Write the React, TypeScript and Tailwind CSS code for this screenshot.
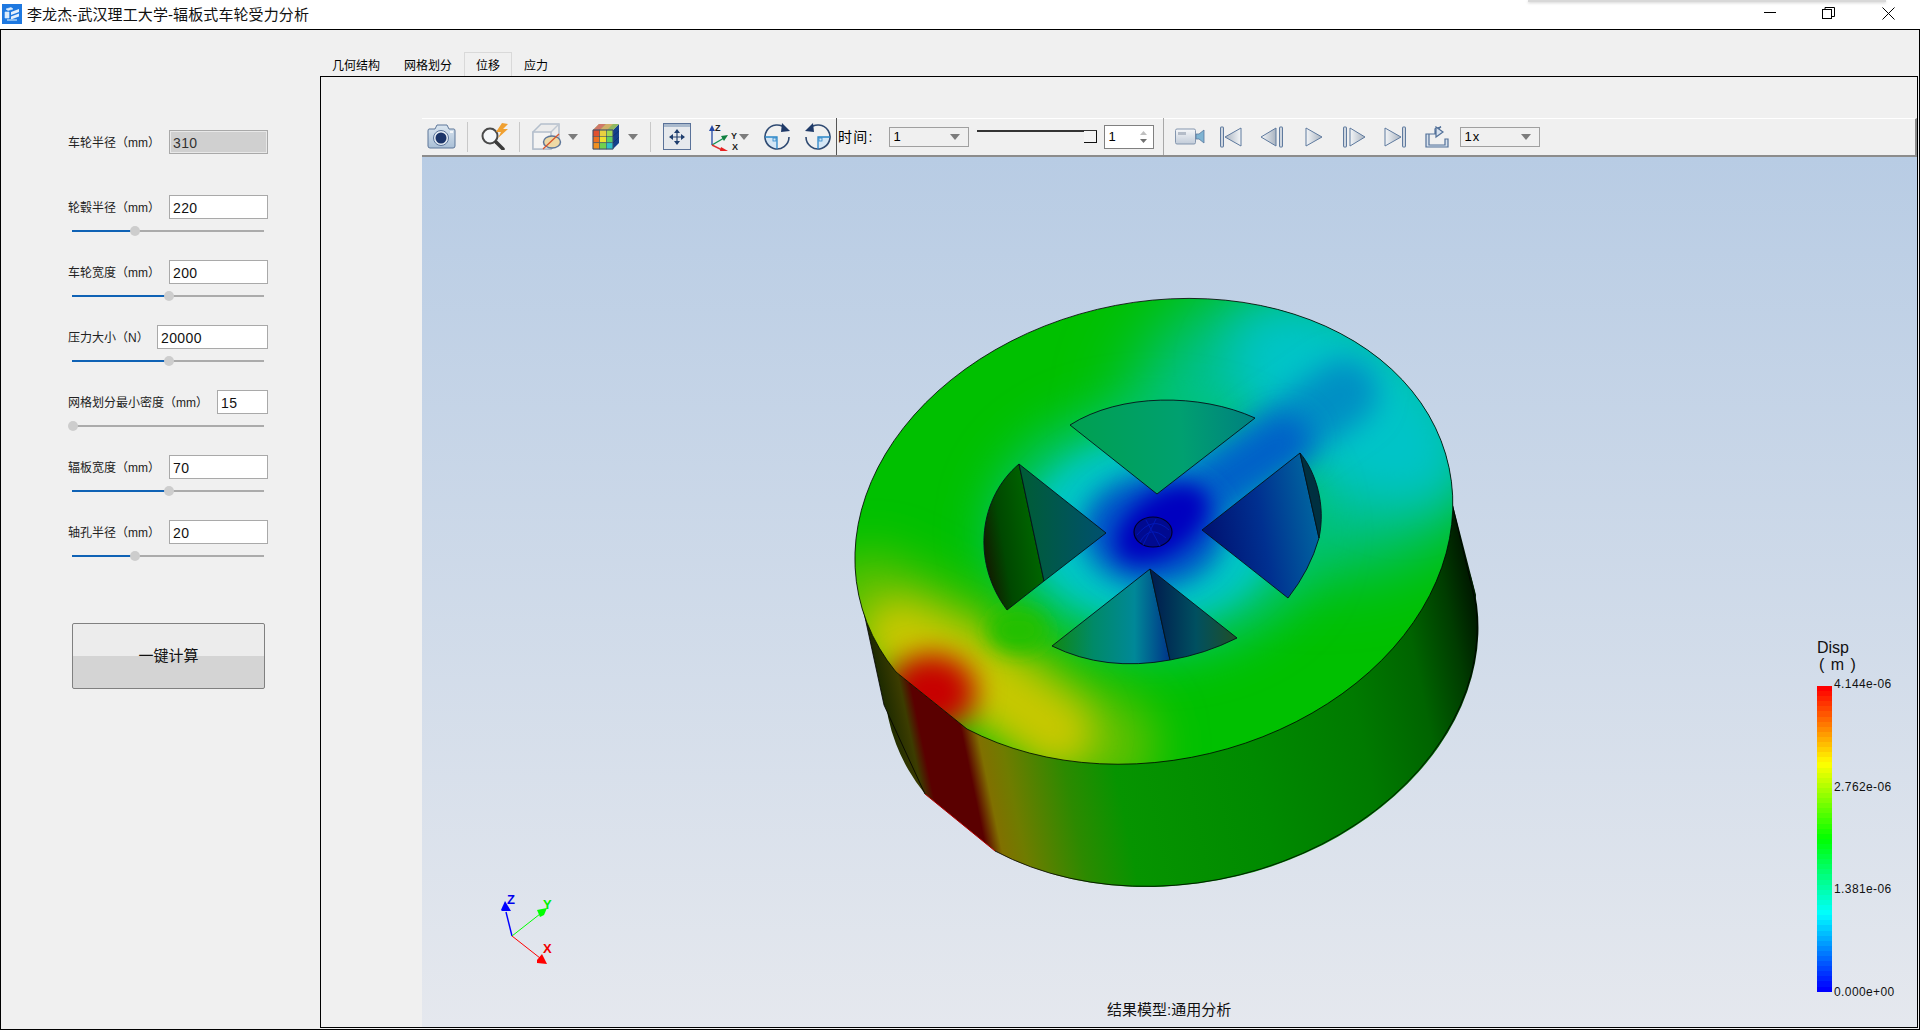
import React from "react";

const fields = [
  { label: "车轮半径（mm）", value: "310", w: "w-[99px]", disabled: true, knob: -1 },
  { label: "轮毂半径（mm）", value: "220", w: "w-[99px]", knob: 63 },
  { label: "车轮宽度（mm）", value: "200", w: "w-[99px]", knob: 97 },
  { label: "压力大小（N）", value: "20000", w: "w-[111px]", knob: 97 },
  { label: "网格划分最小密度（mm）", value: "15", w: "w-[51px]", knob: 1 },
  { label: "辐板宽度（mm）", value: "70", w: "w-[99px]", knob: 97 },
  { label: "轴孔半径（mm）", value: "20", w: "w-[99px]", knob: 63 },
];

function Row({ f }: { f: (typeof fields)[number] }) {
  return (
    <div className="h-[65px] w-[200px] shrink-0">
      <div className="flex h-[24px] items-center justify-between">
        <span className="pt-[2px] text-[12px] leading-none text-[#222]">{f.label}</span>
        <div
          className={`${f.w} h-[24px] border border-[#a9a9a9] pl-[3px] text-[14px] leading-[24px] tracking-[0.4px] ${
            f.disabled ? "bg-[#d0d0d0] text-[#333] outline outline-1 -outline-offset-2 outline-[#e8e8e8]" : "bg-white text-[#111]"
          }`}
        >
          {f.value}
        </div>
      </div>
      {f.knob >= 0 && (
        <div className="relative ml-[4px] mt-[11px] h-[2px] w-[192px] bg-[#ababab]">
          <div className="h-full bg-[#0f62b5]" style={{ width: f.knob < 5 ? 0 : f.knob }} />
          <div
            className="absolute top-[-4px] h-[10px] w-[10px] rounded-full bg-[#cdcdcd]"
            style={{ left: f.knob - 5 }}
          />
        </div>
      )}
    </div>
  );
}

function Arrow({ className = "" }: { className?: string }) {
  return (
    <svg width="10" height="6" viewBox="0 0 10 6" className={className}>
      <path d="M0 0H10L5 6Z" fill="#7c7c7c" />
    </svg>
  );
}

function Sep({ className = "" }: { className?: string }) {
  return <div className={`h-[30px] w-[1px] bg-[#c8c8c8] ${className}`} />;
}

function Combo({ text, className = "" }: { text: string; className?: string }) {
  return (
    <div className={`flex h-[20px] w-[80px] items-center justify-between border border-[#a0a0a0] pl-[4px] pr-[8px] text-[13px] tracking-[1px] ${className}`}>
      <span className="pt-[1px]">{text}</span>
      <Arrow />
    </div>
  );
}

const C = "#5d7699";

const IconCamera = () => (
  <svg width="29" height="25" viewBox="0 0 29 25" className="ml-[5px]">
    <defs>
      <linearGradient id="cam" x1="0" y1="0" x2="0" y2="1">
        <stop offset="0" stopColor="#dbe6f0" />
        <stop offset="1" stopColor="#a9bfd6" />
      </linearGradient>
    </defs>
    <path d="M2 5H8L10 1H20L22 5H27Q28 5 28 7V22Q28 24 26 24H3Q1 24 1 22V7Q1 5 2 5Z" fill="url(#cam)" stroke={C} strokeWidth="1" />
    <circle cx="14" cy="14" r="7.5" fill="#e6edf4" stroke="#5a7399" />
    <circle cx="14" cy="14" r="5.5" fill="#1b3468" />
    <rect x="23" y="7" width="3" height="2" fill="#f4f7fa" />
  </svg>
);

const IconSearch = () => (
  <svg width="30" height="27" viewBox="0 0 30 27" className="ml-[12px]">
    <circle cx="10" cy="13" r="7.5" fill="#f5f7f9" stroke="#4a4a4a" strokeWidth="2" />
    <path d="M16 19L23 26" stroke="#3b3b3b" strokeWidth="3.5" strokeLinecap="round" />
    <path d="M22 0L16 9H21L18 15L28 6H23L28 1Z" fill="#f0a030" />
  </svg>
);

const IconCube = () => (
  <svg width="30" height="27" viewBox="0 0 30 27" className="ml-[12px]">
    <path d="M1 9L9 1H27V18L19 26H1Z" fill="#ececec" stroke="#b4bfcc" strokeWidth="1.5" />
    <path d="M19 9L27 1" fill="none" stroke="#c0c8d2" strokeWidth="1.5" />
    <path d="M1 9H19V26H1Z" fill="#f3f3f3" stroke="#b4bfcc" strokeWidth="1.5" />
    <ellipse cx="20" cy="19" rx="8.5" ry="6" fill="#eed9a5" stroke="#5d7699" strokeWidth="1.5" />
    <path d="M27 11L11 26" stroke="#d8552a" strokeWidth="1.3" />
  </svg>
);

const IconColorCube = () => {
  const cols = ["#e05030", "#e8d040", "#a0d850", "#ee7020", "#f0e030", "#60d060", "#f09020", "#70d050", "#30c0c8"];
  return (
    <svg width="28" height="27" viewBox="0 0 28 27">
      <path d="M21 7L27 1V20L21 26Z" fill="#14408c" />
      <path d="M1 7L7 1H27L21 7Z" fill="#90b860" />
      <path d="M7 1L1 7H8L14 1Z" fill="#d07868" />
      <path d="M14 1L8 7H15L21 1Z" fill="#d0b068" />
      {cols.map((c, i) => (
        <rect key={i} x={1 + (i % 3) * 6.7} y={7 + Math.floor(i / 3) * 6.4} width="6.6" height="6.3" fill={c} stroke="#35485f" strokeWidth="0.5" />
      ))}
      <path d="M1 7H21V26H1Z" fill="none" stroke="#405070" strokeWidth="0.8" />
      <path d="M21 13L27 8M21 20L27 14" stroke="#0c2c68" strokeWidth="0.6" />
    </svg>
  );
};

const IconFit = () => (
  <svg width="28" height="27" viewBox="0 0 28 27">
    <rect x="0.5" y="0.5" width="27" height="26" fill="#e6e9ed" stroke="#5a7299" />
    <rect x="1" y="1" width="26" height="3" fill="#a9b9cc" />
    <path d="M14 7V21M7 14H21" stroke="#26436f" strokeWidth="1.2" />
    <path d="M14 6L11 10H17ZM14 22L11 18H17ZM6 14L10 11V17ZM22 14L18 11V17Z" fill="#1f3e6e" />
  </svg>
);

const IconAxis = () => (
  <svg width="34" height="28" viewBox="0 0 34 28" className="ml-[16px]">
    <path d="M5 22V6" stroke="#3355aa" strokeWidth="1.4" />
    <path d="M5 2L2 8H8Z" fill="#2448a8" />
    <path d="M5 22L17 15" stroke="#109050" strokeWidth="1.4" />
    <path d="M21 12L14 13L17 18Z" fill="#108040" />
    <path d="M5 22L17 28" stroke="#e03030" strokeWidth="1.4" />
    <path d="M21 28L14 24L13 28Z" fill="#e82020" />
    <text x="8" y="8" fontSize="9" fontWeight="bold" fill="#222">Z</text>
    <text x="24" y="16" fontSize="9" fontWeight="bold" fill="#222">Y</text>
    <text x="25" y="27" fontSize="9" fontWeight="bold" fill="#222">X</text>
  </svg>
);

const IconRotate = ({ flip = false, className = "" }: { flip?: boolean; className?: string }) => (
  <svg width="26" height="27" viewBox="0 0 26 27" className={className} style={flip ? { transform: "scaleX(-1)" } : undefined}>
    <path d="M13 14H1A12 12 0 0 0 13 26Z" fill="#d4e6f5" />
    <path d="M22 6A12 12 0 1 0 25 14" fill="none" stroke="#2f4a72" strokeWidth="1.6" />
    <path d="M18 0L26 8L17 9Z" fill="#1f3a68" />
    <path d="M1 14H13V26" fill="none" stroke="#2a86c8" strokeWidth="1.3" />
    <rect x="9" y="15" width="3" height="3" fill="none" stroke="#2a86c8" strokeWidth="0.8" />
  </svg>
);

const IconVideo = () => (
  <svg width="30" height="17" viewBox="0 0 30 17">
    <defs>
      <linearGradient id="vid" x1="0" y1="0" x2="0" y2="1">
        <stop offset="0" stopColor="#f6f7f9" />
        <stop offset="1" stopColor="#c2ccd9" />
      </linearGradient>
    </defs>
    <rect x="0.5" y="1" width="20" height="15" rx="1.5" fill="url(#vid)" stroke="#8496ae" />
    <rect x="3" y="4" width="8" height="3" fill="#b4bcc8" />
    <path d="M21 6H24L29 2V15L24 11H21Z" fill="#7fb4d2" stroke="#5a7a9e" strokeWidth="0.8" />
  </svg>
);

const gradPlay = (
  <defs>
    <linearGradient id="pl" x1="0" y1="0" x2="1" y2="0">
      <stop offset="0" stopColor="#f4f6f8" />
      <stop offset="1" stopColor="#a9b3c0" />
    </linearGradient>
    <linearGradient id="plr" x1="1" y1="0" x2="0" y2="0">
      <stop offset="0" stopColor="#f4f6f8" />
      <stop offset="1" stopColor="#a9b3c0" />
    </linearGradient>
  </defs>
);

const P = ({ w, children, className = "" }: { w: number; children: React.ReactNode; className?: string }) => (
  <svg width={w} height="22" viewBox={`0 0 ${w} 22`} className={className}>
    {gradPlay}
    {children}
  </svg>
);

const Bar = ({ x }: { x: number }) => <rect x={x} y="1" width="3" height="20" rx="0.5" fill="#cfd6df" stroke="#5f7a9e" strokeWidth="1" />;

const IconExport = () => (
  <svg width="24" height="22" viewBox="0 0 24 22">
    <path d="M1 8H10V3L16 0.8L11 5V8H4V19H20V13H23V21H1Z" fill="#d8e2ee" stroke="#527098" strokeWidth="1.2" />
    <path d="M11 1L18 6L11 11Z" fill="#d8e2ee" stroke="#527098" strokeWidth="1.2" />
  </svg>
);

const N = 60;
function heat(t: number) {
  const s = Math.min(t * 4, 3.999);
  const u = s - Math.floor(s);
  const v = Math.round(u * 255);
  if (s < 1) return `rgb(255,${v},0)`;
  if (s < 2) return `rgb(${255 - v},255,0)`;
  if (s < 3) return `rgb(0,255,${v})`;
  return `rgb(0,${255 - v},255)`;
}

const F = "M896 672A302 229 -12.5 1 1 967 729Z";

const Blur = ({ id, d }: { id: string; d: number }) => (
  <filter id={id} filterUnits="userSpaceOnUse" x="700" y="200" width="900" height="700">
    <feGaussianBlur stdDeviation={d} />
  </filter>
);

function Scene() {
  return (
    <svg className="absolute inset-0" width="1494" height="870" viewBox="422 157 1494 870">
      <defs>
        <clipPath id="face"><path d={F} /></clipPath>
        <Blur id="b6" d={6} />
        <Blur id="b10" d={10} />
        <Blur id="b14" d={14} />
        <Blur id="b18" d={18} />
        <Blur id="b24" d={24} />
        <Blur id="b36" d={36} />
        <linearGradient id="wall" gradientUnits="userSpaceOnUse" x1="860" y1="700" x2="1467" y2="574">
          <stop offset="0" stopColor="#000" />
          <stop offset="0.035" stopColor="#1c2a00" />
          <stop offset="0.068" stopColor="#3c3c00" />
          <stop offset="0.085" stopColor="#5a0000" />
          <stop offset="0.15" stopColor="#5a0000" />
          <stop offset="0.175" stopColor="#807000" />
          <stop offset="0.21" stopColor="#6f7c00" />
          <stop offset="0.3" stopColor="#2c8a00" />
          <stop offset="0.38" stopColor="#069400" />
          <stop offset="0.6" stopColor="#008a00" />
          <stop offset="0.78" stopColor="#007a00" />
          <stop offset="0.89" stopColor="#006400" />
          <stop offset="0.96" stopColor="#003c00" />
          <stop offset="1" stopColor="#001c00" />
        </linearGradient>
        <linearGradient id="s1" gradientUnits="userSpaceOnUse" x1="1070" y1="430" x2="1255" y2="420">
          <stop offset="0" stopColor="#00a050" />
          <stop offset="0.6" stopColor="#00a070" />
          <stop offset="1" stopColor="#008080" />
        </linearGradient>
        <linearGradient id="s2a" gradientUnits="userSpaceOnUse" x1="984" y1="540" x2="1044" y2="530">
          <stop offset="0" stopColor="#102000" />
          <stop offset="0.3" stopColor="#004800" />
          <stop offset="1" stopColor="#006c00" />
        </linearGradient>
        <linearGradient id="s2b" gradientUnits="userSpaceOnUse" x1="1025" y1="530" x2="1106" y2="530">
          <stop offset="0" stopColor="#005c38" />
          <stop offset="1" stopColor="#005070" />
        </linearGradient>
        <linearGradient id="s3" gradientUnits="userSpaceOnUse" x1="1202" y1="530" x2="1320" y2="510">
          <stop offset="0" stopColor="#001070" />
          <stop offset="0.5" stopColor="#003090" />
          <stop offset="1" stopColor="#0068a0" />
        </linearGradient>
        <linearGradient id="s4a" gradientUnits="userSpaceOnUse" x1="1052" y1="620" x2="1170" y2="620">
          <stop offset="0" stopColor="#108810" />
          <stop offset="0.35" stopColor="#008a68" />
          <stop offset="0.7" stopColor="#008898" />
          <stop offset="1" stopColor="#003488" />
        </linearGradient>
        <linearGradient id="s4b" gradientUnits="userSpaceOnUse" x1="1155" y1="620" x2="1237" y2="620">
          <stop offset="0" stopColor="#002050" />
          <stop offset="0.5" stopColor="#005060" />
          <stop offset="1" stopColor="#205028" />
        </linearGradient>
      </defs>

      {/* wall */}
      <g fill="url(#wall)">
        <path d="M925 794A300 229 -12.5 1 1 995 851Z" />
        <polygon points="863,608 884,705 925,794 1000,700 1100,500 1447,482 1476,595 1470,650 1300,700" />
      </g>
      <g fill="none" stroke="#000" strokeWidth="0.8">
        <path d="M995 851A300 229 -12.5 0 0 1476 605" />
        <path d="M925 794L884 705L863 608" />
        <path d="M1476 605L1447 482" />
      </g>
      <path d="M925 794L995 851" stroke="#b00000" strokeWidth="1" />

      {/* face */}
      <g clipPath="url(#face)">
        <rect x="840" y="280" width="630" height="500" fill="#00c000" />
        {/* upper right teal and rim cyan */}
        <ellipse cx="1320" cy="420" rx="190" ry="150" fill="#00c090" filter="url(#b36)" />
        <ellipse cx="1345" cy="405" rx="130" ry="72" fill="#00c4c8" filter="url(#b24)" transform="rotate(37 1345 405)" />
        {/* hub halo */}
        <ellipse cx="1153" cy="531" rx="165" ry="125" fill="#00c470" filter="url(#b24)" />
        <ellipse cx="1153" cy="531" rx="125" ry="92" fill="#00c8c4" filter="url(#b14)" />
        {/* blue streak */}
        <g fill="none" strokeLinecap="round">
          <path d="M1170 515L1345 392" stroke="#0090c4" strokeWidth="66" filter="url(#b14)" />
          <path d="M1165 520L1285 440" stroke="#0060c8" strokeWidth="50" filter="url(#b14)" />
        </g>
        <ellipse cx="1153" cy="531" rx="70" ry="56" fill="#0050c8" filter="url(#b14)" />
        <ellipse cx="1162" cy="524" rx="52" ry="30" fill="#0000c0" filter="url(#b10)" transform="rotate(-35 1162 524)" />
        {/* yellow and red load zone */}
        <g fill="none" strokeLinecap="round">
          <path d="M870 605L950 645L1060 725L1105 745" stroke="#60c000" strokeWidth="105" filter="url(#b24)" />
          <path d="M898 635L950 658L1020 705L1058 732" stroke="#c8c800" strokeWidth="72" filter="url(#b18)" />
        </g>
        <ellipse cx="1018" cy="630" rx="30" ry="22" fill="#20c000" filter="url(#b10)" />
        <ellipse cx="932" cy="692" rx="44" ry="38" fill="#c80000" filter="url(#b14)" />
      </g>
      <path d={F} fill="none" stroke="#000" strokeWidth="0.8" />

      {/* sectors */}
      <g stroke="#06121a" strokeWidth="0.9">
        <path d="M1070 425C1120 393 1200 393 1255 418L1157 494Z" fill="url(#s1)" />
        <path d="M1019 464C980 497 970 560 1007 610L1044 581Z" fill="url(#s2a)" />
        <path d="M1019 464L1106 533L1044 581Z" fill="url(#s2b)" />
        <path d="M1202 530L1300 453L1319 538Q1310 570 1288 598Z" fill="url(#s3)" />
        <path d="M1300 453C1316 472 1326 505 1319 538Z" fill="#003040" />
        <path d="M1052 646Q1105 672 1170 660L1150 569Z" fill="url(#s4a)" />
        <path d="M1150 569L1170 660Q1205 654 1237 638Z" fill="url(#s4b)" />
      </g>
      <ellipse cx="1153" cy="532" rx="19" ry="15" fill="#000a90" stroke="#000028" strokeWidth="1.2" />
      <path d="M1137 535Q1153 515 1169 530M1140 542Q1150 524 1166 538M1146 520L1160 546M1156 519L1143 545" fill="none" stroke="#0018b8" strokeWidth="1" />

      {/* triad */}
      <path d="M512 936L506 912" stroke="#0000ff" strokeWidth="1.4" />
      <path d="M512 936L540 914" stroke="#00ff00" strokeWidth="1" />
      <path d="M512 936L540 958" stroke="#ff0000" strokeWidth="1" />
      <path d="M505 901L501 910L502 911L511 911L508 906Z" fill="#0000ff" />
      <path d="M547 908L537 910L540 917L544 915Z" fill="#00ff00" />
      <path d="M547 964L542 954L537 960L537 963Z" fill="#ff0000" />
      <text x="507" y="904" fontSize="13" fontWeight="bold" fill="#0000ee" fontFamily="Liberation Sans, sans-serif">Z</text>
      <text x="543" y="909" fontSize="13" fontWeight="bold" fill="#00f000" fontFamily="Liberation Sans, sans-serif">Y</text>
      <text x="543" y="953" fontSize="13" fontWeight="bold" fill="#f00000" fontFamily="Liberation Sans, sans-serif">X</text>
    </svg>
  );
}

export default function App() {
  return (
    <div className="relative flex h-[1030px] w-[1920px] flex-col overflow-hidden bg-white font-['Liberation_Sans','Noto_Sans_CJK_SC',sans-serif] text-black">
      {/* title bar */}
      <div className="flex h-[29px] shrink-0 items-center">
        <svg width="20" height="20" viewBox="0 0 20 20" className="ml-[2px] mt-[-1px]">
          <rect width="20" height="20" fill="#1e78e0" />
          <path d="M4 5L9 3.5L11 5L6 6.5ZM3 8H7V14H3ZM4 9.5H6M4 12H6" fill="#dcecfb" stroke="#dcecfb" strokeWidth="0.6" />
          <path d="M9 8L17 5V8L9 11ZM9 12.5L17 9.5V12.5L9 15.5Z" fill="#e6f1fc" />
          <path d="M5 16L15 16" stroke="#a8d0f6" strokeWidth="1.5" />
        </svg>
        <span className="ml-[5px] text-[15px] leading-none tracking-[0.1px] text-[#111]">李龙杰-武汉理工大学-辐板式车轮受力分析</span>
        <div className="flex-1" />
        <svg width="13" height="2" viewBox="0 0 13 2" className="mr-[45px] mt-[-3px]"><rect width="12" height="1" fill="#000" /></svg>
        <svg width="13" height="13" viewBox="0 0 13 13" className="mr-[47px] mt-[-2px]">
          <rect x="0.5" y="2.5" width="9" height="9" fill="none" stroke="#000" />
          <path d="M3 2.5V0.5H12.5V9.5H9.5" fill="none" stroke="#000" />
        </svg>
        <svg width="13" height="13" viewBox="0 0 13 13" className="mr-[25px] mt-[-2px]">
          <path d="M0.5 0.5L12.5 12.5M12.5 0.5L0.5 12.5" stroke="#000" strokeWidth="1" />
        </svg>
      </div>
      <div className="absolute left-[1528px] top-0 h-[2px] w-[358px] bg-[#d8d8d8] shadow-[0_1px_3px_#cfcfcf]" />

      {/* body */}
      <div className="flex min-h-0 flex-1 border border-black bg-[#f0f0f0]">
        {/* side panel */}
        <div className="flex w-[319px] shrink-0 flex-col pl-[67px] pt-[100px]">
          {fields.map((f) => (
            <Row key={f.label} f={f} />
          ))}
          <div className="relative ml-[4px] mt-[38px] flex h-[66px] w-[193px] items-center justify-center overflow-hidden rounded-[2px] border border-[#808080] bg-[linear-gradient(#ececec_0%,#ececec_50%,#d4d4d4_50%,#d4d4d4_100%)] text-[15px] text-[#111]">
            一键计算
          </div>
        </div>

        {/* main */}
        <div className="flex min-w-0 flex-1 flex-col pb-[1px] pr-[1px]">
          <div className="mt-[22px] flex h-[24px] shrink-0 text-[12px]">
            <div className="px-3 pt-[7px] leading-[15px]">几何结构</div>
            <div className="px-3 pt-[7px] leading-[15px]">网格划分</div>
            <div className="h-[24px] border border-b-0 border-[#d9d9d9] px-[11px] pt-[6px] leading-[15px]">位移</div>
            <div className="px-3 pt-[7px] leading-[15px]">应力</div>
          </div>
          <div className="flex min-h-0 flex-1 flex-col border border-black pl-[101px] pt-[41px]">
            {/* toolbar */}
            <div className="flex h-[39px] shrink-0 items-center border-r-2 border-t border-r-[#8a8a8a] border-t-white">
              <div className="flex h-full flex-1 items-center border-b-2 border-[#8c8c8c] pb-[1px]">
                <IconCamera />
                <Sep className="ml-[11px]" />
                <IconSearch />
                <Sep className="ml-[9px]" />
                <IconCube />
                <Arrow className="ml-[6px]" />
                <div className="w-[14px]" />
                <IconColorCube />
                <Arrow className="ml-[8px]" />
                <Sep className="ml-[12px]" />
                <div className="w-[12px]" />
                <IconFit />
                <IconAxis />
                <Arrow className="ml-[-2px]" />
                <IconRotate className="ml-[15px]" />
                <IconRotate flip className="ml-[15px]" />
                <div className="ml-[5px] h-[37px] w-[1px] bg-[#555]" />
                <span className="ml-[1px] text-[14px] leading-none tracking-[1.2px]">时间:</span>
                <Combo text="1" className="ml-[15px]" />
                <div className="relative ml-[8px] h-[20px] w-[120px]">
                  <div className="absolute left-0 top-[3px] h-[2px] w-full bg-[#333]" />
                  <div className="absolute right-0 top-[4px] h-[12px] w-[13px] border-b border-r border-[#111] bg-[#f4f4f4]" />
                </div>
                <div className="ml-[7px] flex h-[24px] w-[50px] items-center justify-between border border-[#808080] bg-white pl-[4px] pr-[6px] text-[13px]">
                  <span>1</span>
                  <svg width="7" height="14" viewBox="0 0 7 14">
                    <path d="M3.5 1L7 5H0Z" fill="#c0c0c0" />
                    <path d="M3.5 13L7 9H0Z" fill="#707070" />
                  </svg>
                </div>
                <div className="ml-[9px] h-[37px] w-[1px] bg-[#a8a8a8]" />
                <div className="w-[11px]" />
                <IconVideo />
                <P w={22} className="ml-[15px]">
                  <Bar x={0.5} />
                  <path d="M5 11L21 2V20Z" fill="url(#plr)" stroke="#5f7a9e" />
                </P>
                <P w={23} className="ml-[18px]">
                  <path d="M1 11L16 2V20Z" fill="url(#pl)" stroke="#5f7a9e" />
                  <Bar x={19.5} />
                </P>
                <P w={18} className="ml-[22px]">
                  <path d="M1 2L17 11L1 20Z" fill="url(#pl)" stroke="#5f7a9e" />
                </P>
                <P w={23} className="ml-[20px]">
                  <Bar x={0.5} />
                  <path d="M7 2L22 11L7 20Z" fill="url(#pl)" stroke="#5f7a9e" />
                </P>
                <P w={22} className="ml-[18px]">
                  <path d="M1 2L17 11L1 20Z" fill="url(#pl)" stroke="#5f7a9e" />
                  <Bar x={18.5} />
                </P>
                <div className="ml-[19px]"><IconExport /></div>
                <Combo text="1x" className="ml-[11px]" />
              </div>
            </div>
            {/* viewport */}
            <div className="relative min-h-0 flex-1 bg-[linear-gradient(#b8cce4,#e5e8ee)]">
              <Scene />
              <div className="absolute left-[1395px] top-[482px] flex flex-col">
                <div className="text-[16px] leading-[17px] text-[#111]">Disp</div>
                <div className="ml-[2px] text-[16px] leading-[17px] tracking-[1px] text-[#111]">( m )</div>
              </div>
              <div className="absolute left-[1395px] top-[519px] flex">
                <div className="mt-[10px] flex h-[306px] w-[15px] flex-col">
                  {Array.from({ length: N }, (_, i) => (
                    <div key={i} className="flex-1" style={{ background: heat(i / (N - 1)) }} />
                  ))}
                </div>
                <div className="ml-[2px] mt-[1px] flex h-[322px] flex-col justify-between text-[12px] leading-[14px] tracking-[0.4px] text-[#111]">
                  <span>4.144e-06</span>
                  <span>2.762e-06</span>
                  <span>1.381e-06</span>
                  <span>0.000e+00</span>
                </div>
              </div>
              <div className="absolute left-[685px] top-[844px] text-[15px] leading-[18px] text-[#111]">结果模型:通用分析</div>
            </div>
          </div>
        </div>
      </div>
    </div>
  );
}
